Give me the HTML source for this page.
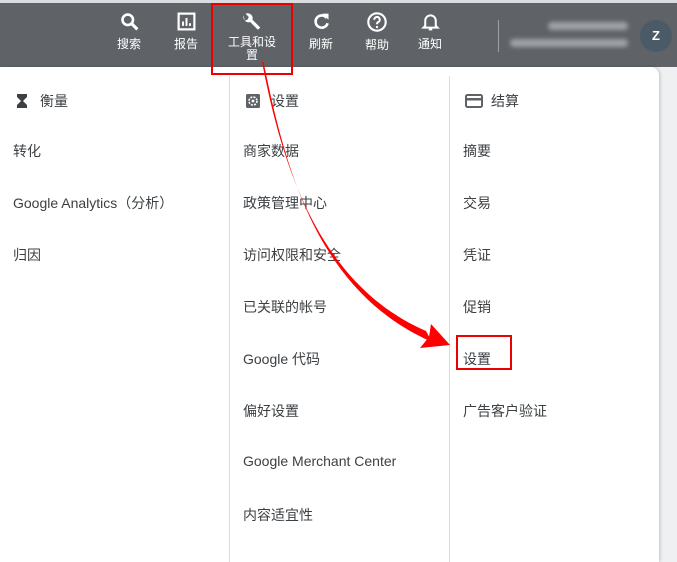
<!DOCTYPE html>
<html><head><meta charset="utf-8"><style>
*{margin:0;padding:0;box-sizing:border-box}
body{width:677px;height:562px;overflow:hidden;background:#eef0f1;font-family:"Liberation Sans","Noto Sans CJK SC",sans-serif;position:relative;color:#3c4043}
.top{position:absolute;left:0;top:0;width:677px;height:3px;background:#dadce0}
.hdr{position:absolute;left:0;top:3px;width:677px;height:64px;background:#5f6368}
.nav{position:absolute;top:0;text-align:center;color:#fff;font-size:12px;width:50px}
.nav svg{display:block;margin:8px auto 3px}
.panel{position:absolute;left:0;top:67px;width:659px;height:495px;background:#fff;border-top-right-radius:8px;box-shadow:1px 0 3px rgba(0,0,0,.2)}
.div{position:absolute;top:9px;bottom:0;width:1px;background:#dadce0}
.item{position:absolute;font-size:14px;color:#3c4043;white-space:nowrap}
</style></head><body>
<div class="top"></div>
<div class="hdr">
 <div class="nav" style="left:104px"><svg width="21" height="21" viewBox="0 0 24 24"><circle cx="10" cy="10" r="6" fill="none" stroke="#fff" stroke-width="3"/><path d="M14 14l7 7" stroke="#fff" stroke-width="3.5"/></svg>搜索</div>
 <div class="nav" style="left:161px"><svg width="21" height="21" viewBox="0 0 24 24"><rect x="3" y="3" width="18" height="18" fill="none" stroke="#fff" stroke-width="2.5"/><path d="M8 17v-5M12 17V8M16 17v-3" stroke="#fff" stroke-width="2.2"/></svg>报告</div>
 <div class="nav" style="left:212px;width:80px;line-height:13px"><svg width="22" height="22" viewBox="0 0 24 24"><path d="M3 5a5.5 5.5 0 0 0 7 7l8.5 8.5 2.5-2.5L12.5 9.5A5.5 5.5 0 0 0 5 3l3.5 3.5-1.5 3-3 1z" fill="#fff"/></svg>工具和设<br>置</div>
 <div class="nav" style="left:296px"><svg width="21" height="21" viewBox="0 0 24 24"><path d="M18 8a7 7 0 1 0 1 6" fill="none" stroke="#fff" stroke-width="3"/><path d="M13 3h7v7z" fill="#fff"/></svg>刷新</div>
 <div class="nav" style="left:352px"><svg width="22" height="22" viewBox="0 0 24 24"><circle cx="12" cy="12" r="9.5" fill="none" stroke="#fff" stroke-width="2.3"/><path d="M9 9.5a3 3 0 1 1 4 2.8c-1 .5-1 1-1 2.2" fill="none" stroke="#fff" stroke-width="2.2"/><circle cx="12" cy="17.5" r="1.3" fill="#fff"/></svg>帮助</div>
 <div class="nav" style="left:405px"><svg width="21" height="21" viewBox="0 0 24 24"><path d="M6 17V11a6 6 0 0 1 12 0v6l2 2H4z" fill="none" stroke="#fff" stroke-width="2.3"/><path d="M10 21h4" stroke="#fff" stroke-width="2.3"/></svg>通知</div>
 <div style="position:absolute;left:498px;top:17px;width:1px;height:32px;background:#9aa0a6"></div>
 <div style="position:absolute;left:548px;top:19px;width:80px;height:8px;background:#9ea2a6;border-radius:4px;filter:blur(2px)"></div>
 <div style="position:absolute;left:510px;top:36px;width:118px;height:8px;background:#9ea2a6;border-radius:4px;filter:blur(2px)"></div>
 <div style="position:absolute;left:640px;top:17px;width:32px;height:32px;border-radius:50%;background:#4a5a66;color:#fff;font-size:13px;font-weight:bold;text-align:center;line-height:32px">Z</div>
</div>
<div class="panel">
 <div class="div" style="left:229px"></div>
 <div class="div" style="left:449px"></div>
 <svg style="position:absolute;left:15px;top:26px" width="14" height="16" viewBox="0 0 14 16"><path d="M2 1h10v3l-4 4 4 4v3H2v-3l4-4-4-4z" fill="#3c4043"/></svg>
 <div class="item" style="left:40px;top:24px">衡量</div>
 <div class="item" style="left:13px;top:74px">转化</div>
 <div class="item" style="left:13px;top:126px">Google Analytics（分析）</div>
 <div class="item" style="left:13px;top:178px">归因</div>
 <svg style="position:absolute;left:245px;top:26px" width="16" height="16" viewBox="0 0 16 16"><rect x="1" y="1" width="14" height="14" rx="1.5" fill="#5f6368"/><circle cx="8" cy="8" r="4" fill="none" stroke="#fff" stroke-width="1.6" stroke-dasharray="2 1.2"/><circle cx="8" cy="8" r="1.4" fill="#fff"/></svg>
 <div class="item" style="left:271px;top:24px">设置</div>
 <div class="item" style="left:243px;top:74px">商家数据</div>
 <div class="item" style="left:243px;top:126px">政策管理中心</div>
 <div class="item" style="left:243px;top:178px">访问权限和安全</div>
 <div class="item" style="left:243px;top:230px">已关联的帐号</div>
 <div class="item" style="left:243px;top:282px">Google 代码</div>
 <div class="item" style="left:243px;top:334px">偏好设置</div>
 <div class="item" style="left:243px;top:386px">Google Merchant Center</div>
 <div class="item" style="left:243px;top:438px">内容适宜性</div>
 <svg style="position:absolute;left:465px;top:27px" width="18" height="14" viewBox="0 0 18 14"><rect x="1" y="1" width="16" height="12" rx="1.5" fill="none" stroke="#5f6368" stroke-width="2"/><rect x="1" y="4" width="16" height="2.5" fill="#5f6368"/></svg>
 <div class="item" style="left:491px;top:24px">结算</div>
 <div class="item" style="left:463px;top:74px">摘要</div>
 <div class="item" style="left:463px;top:126px">交易</div>
 <div class="item" style="left:463px;top:178px">凭证</div>
 <div class="item" style="left:463px;top:230px">促销</div>
 <div class="item" style="left:463px;top:282px">设置</div>
 <div class="item" style="left:463px;top:334px">广告客户验证</div>
</div>
<div style="position:absolute;left:211px;top:3px;width:82px;height:72px;border:2px solid #e00"></div>
<div style="position:absolute;left:456px;top:335px;width:56px;height:35px;border:2px solid #e00"></div>
<svg style="position:absolute;left:0;top:0" width="677" height="562">
 <path d="M262 62 C283 172 322 286 426 331 L432 342 C318 292 286 172 263.5 62 Z" fill="#f00"/>
 <path d="M450 345 L431 324 L429 337 L420 348 Z" fill="#f00"/>
</svg>
</body></html>
